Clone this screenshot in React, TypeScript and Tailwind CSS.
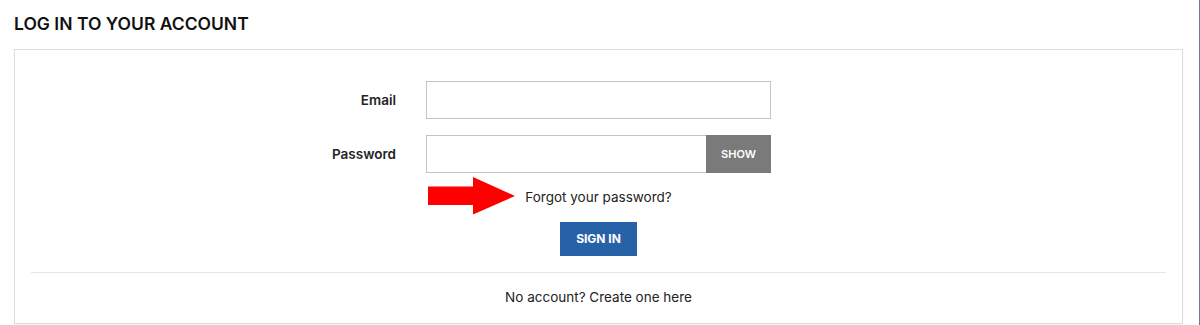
export default function App() {
  return (
    <div className="h-[325px] w-[1200px] overflow-hidden border-r border-[#6a7d92] bg-white font-['Inter',sans-serif] text-[#232323]">
      <div className="px-[14px] pt-[13px]">
        <h1 className="text-[17.5px] font-semibold uppercase leading-[22px] text-[#111]">Log in to your account</h1>
        <div className="mt-[14px] mr-[2px] h-[275px] border border-[#dcdcdc] bg-white shadow-[0_1px_2px_rgba(0,0,0,0.06)]">
          <form className="px-4 pt-[31px]">
            <div className="grid grid-cols-[1fr_345px_1fr] items-center gap-x-[30px] gap-y-4">
              <label className="text-right text-[13.5px] font-semibold">Email</label>
              <input type="email" className="h-[38px] border border-[#c4c4c4] bg-white px-3 text-sm outline-none" />
              <div />
              <label className="text-right text-[13.5px] font-semibold">Password</label>
              <div className="flex h-[38px]">
                <input type="password" className="min-w-0 flex-1 border border-r-0 border-[#c4c4c4] bg-white px-3 text-sm outline-none" />
                <button type="button" className="w-[65px] bg-[#7a7a7a] text-[11px] font-semibold uppercase text-white">
                  Show
                </button>
              </div>
              <div />
            </div>
            <div className="mt-[11px] flex justify-center">
              <div className="relative">
                <RedArrow />
                <a href="#" className="text-[13.5px] leading-5">
                  Forgot your password?
                </a>
              </div>
            </div>
            <div className="mt-[14px] flex justify-center">
              <button type="submit" className="h-[34px] w-[77px] bg-[#2762a9] text-xs font-bold uppercase text-white">
                Sign in
              </button>
            </div>
          </form>
          <div className="mx-4 mt-4 border-t border-[#e5e5e5]" />
          <div className="pt-[14px] text-center text-[13.5px] leading-5">
            <a href="#">No account? Create one here</a>
          </div>
        </div>
      </div>
    </div>
  );
}

function RedArrow() {
  return (
    <svg
      className="absolute top-1/2 -left-[97px] -translate-y-1/2"
      width="87"
      height="38"
      viewBox="0 0 87 38"
    >
      <path d="M0 9.5h45V0l42 19-42 18.5V28H0z" fill="#ff0000" />
    </svg>
  );
}
